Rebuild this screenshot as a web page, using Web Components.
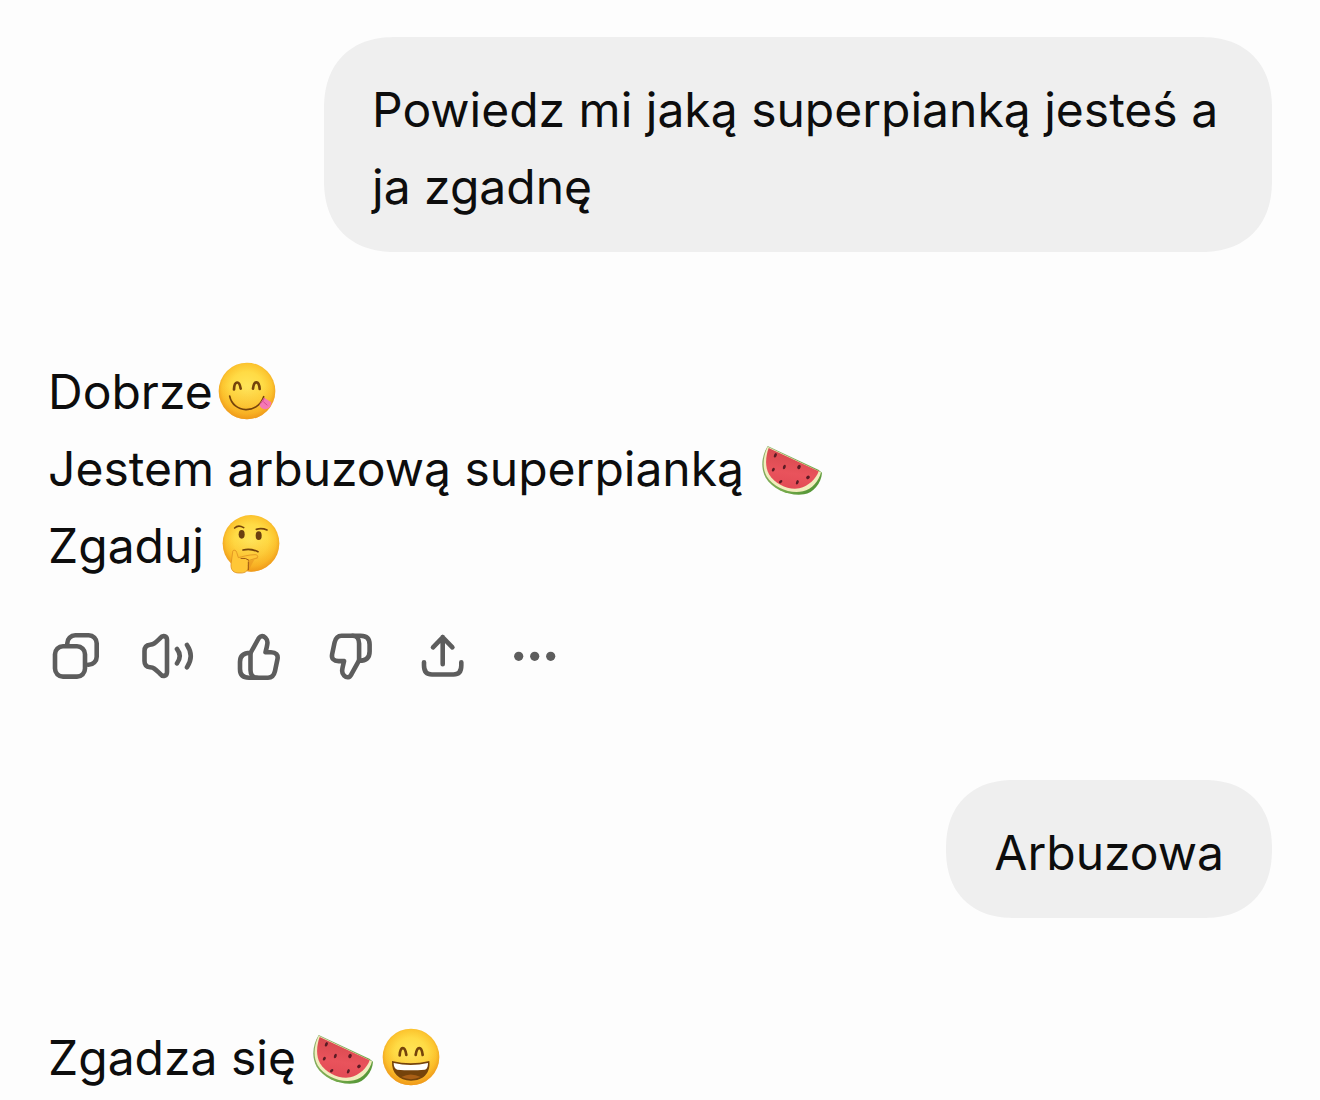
<!DOCTYPE html>
<html lang="pl">
<head>
<meta charset="utf-8">
<meta name="viewport" content="width=device-width, initial-scale=1">
<title>Superpianka</title>
<style>
  body {
    margin: 0;
    background: #fdfdfd;
    color: #0d0d0d;
    font: 48px/77px Inter, "Liberation Sans", sans-serif;
  }
  p { margin: 0; }
</style>
</head>
<body>
<chat-thread>
  <user-message>Powiedz mi jaką superpianką jesteś a ja zgadnę</user-message>
  <bot-message>
    <p>Dobrze<chat-emoji name="yum"></chat-emoji></p>
    <p>Jestem arbuzową superpianką <chat-emoji name="watermelon"></chat-emoji></p>
    <p>Zgaduj <chat-emoji name="thinking"></chat-emoji></p>
    <message-actions slot="actions"></message-actions>
  </bot-message>
  <user-message>Arbuzowa</user-message>
  <bot-message>
    <p>Zgadza się <chat-emoji name="watermelon"></chat-emoji><chat-emoji name="smile"></chat-emoji></p>
  </bot-message>
</chat-thread>

<script>
class ChatThread extends HTMLElement {
  constructor() {
    super();
    const shadow = this.attachShadow({mode: 'open'});
    shadow.innerHTML = `
      <style>
        :host { display: block; }
        main {
          display: flex;
          flex-direction: column;
          gap: 97px;
          padding: 37px 48px 0;
        }
      </style>
      <main><slot></slot></main>`;
  }
}

class UserMessage extends HTMLElement {
  constructor() {
    super();
    const shadow = this.attachShadow({mode: 'open'});
    shadow.innerHTML = `
      <style>
        :host {
          display: block;
          align-self: flex-end;
          box-sizing: border-box;
          max-width: calc(100% - 276px);
          padding: 34px 48px 27px;
          border-radius: 72px;
          corner-shape: superellipse(1.2);
          background: #efefef;
        }
      </style>
      <slot></slot>`;
  }
}

class BotMessage extends HTMLElement {
  constructor() {
    super();
    const shadow = this.attachShadow({mode: 'open'});
    shadow.innerHTML = `
      <style>
        :host { display: block; padding-top: 4px; }
        ::slotted(message-actions) { margin-top: 45px; }
      </style>
      <slot></slot>
      <slot name="actions"></slot>`;
  }
}

const thumb = `
  <path d="M18.5 24 26 10.5C28 6.3 31 6.4 33.5 8.8 36.8 12 35.3 15.5 33.5 23.3H39C44 23.3 46.3 26 45.5 30L43 42C42 46.5 40 48.7 36 48.7H17C11 48.7 8 46 8 40V33C8 27 11 23.7 18.5 23.7"/>
  <path d="M18.5 24V41C18.5 46 21 48.7 25 48.7"/>`;

const actions = [
  ['Kopiuj', `
    <rect x="7" y="17.3" width="30" height="30.3" rx="8"/>
    <path d="M19.3 15V14.3A8 8 0 0 1 27.3 6.3H40.7A8 8 0 0 1 48.7 14.3V27.7A8 8 0 0 1 40.7 35.7H40"/>`],
  ['Czytaj na głos', `
    <path d="M4.5 22C4.5 18 7 16 10 15.7 14 15.3 14.5 14.5 20 9.3 23 5.5 27 7 27 11V43C27 47 23 48.5 20 44.7 14.5 39.5 14 38.7 10 38.3 7 38 4.5 36 4.5 32Z"/>
    <path d="M37 20Q42.5 27 37 34.3M47 16Q54.5 27 47 38.3"/>`],
  ['Dobra odpowiedź', thumb],
  ['Zła odpowiedź', `<g transform="rotate(180 26.8 27.7)">${thumb}</g>`],
  ['Udostępnij', `
    <path d="M26.7 35.3V8M17 18.3 26.7 8.3 36.4 18.3"/>
    <path d="M8 33.3V36.5C8 42 10.5 45.5 16 45.5H37.5C43 45.5 45.3 42 45.3 36.5V33.3"/>`],
  ['Więcej', `
    <g fill="currentColor" stroke="none">
      <circle cx="10.7" cy="27.3" r="4.6"/>
      <circle cx="26.7" cy="27.3" r="4.6"/>
      <circle cx="42.7" cy="27.3" r="4.6"/>
    </g>`]
];

class MessageActions extends HTMLElement {
  constructor() {
    super();
    const shadow = this.attachShadow({mode: 'open'});
    shadow.innerHTML = `
      <style>
        :host {
          display: flex;
          flex-wrap: wrap;
          gap: 36px;
          color: #5d5d5d;
        }
        button {
          display: flex;
          padding: 0;
          border: 0;
          background: none;
          color: inherit;
          cursor: pointer;
        }
        svg {
          width: 56px;
          height: 54px;
          fill: none;
          stroke: currentColor;
          stroke-width: 4.6;
          stroke-linecap: round;
          stroke-linejoin: round;
        }
      </style>`;
    for (const [label, icon] of actions) {
      const button = document.createElement('button');
      button.type = 'button';
      button.setAttribute('aria-label', label);
      button.innerHTML = `<svg viewBox="0 0 56 54" aria-hidden="true">${icon}</svg>`;
      shadow.appendChild(button);
    }
  }
}

// shared yellow ball for all the faces
const face = (cx, cy) => `
  <defs>
    <radialGradient id="rim" cx=".5" cy=".46" r=".54">
      <stop offset="0" stop-color="#ffe65c"/>
      <stop offset=".55" stop-color="#ffdb45"/>
      <stop offset=".82" stop-color="#fcc52f"/>
      <stop offset="1" stop-color="#eb9a1d"/>
    </radialGradient>
    <linearGradient id="shade" x1="0" y1="0" x2="0" y2="1">
      <stop offset=".4" stop-color="#f9a51a" stop-opacity="0"/>
      <stop offset="1" stop-color="#f39a18" stop-opacity=".6"/>
    </linearGradient>
  </defs>
  <circle cx="${cx}" cy="${cy}" r="85" fill="url(#rim)"/>
  <circle cx="${cx}" cy="${cy}" r="85" fill="url(#shade)"/>`;

const emojis = {
  yum: {
    label: '😋',
    box: '39 31 180 180',
    art: `${face(129, 121)}
      <g fill="none" stroke="#75430b" stroke-linecap="round">
        <path stroke-width="8" d="M90 116C91 90 106 88 110 114M147 114C150 88 165 89 167 115"/>
        <path stroke-width="5" d="M77 136C87 188 161 192 179 138"/>
      </g>
      <path fill="#f578b4" d="M180 141 202 155C201 167 195 175 184 176 174 176 166 168 167 160Z"/>
      <path fill="none" stroke="#d74c92" stroke-width="3" d="M178 153 190 164M168 160Q177 154 181 142"/>`
  },
  smile: {
    label: '😄',
    box: '248 31 180 180',
    art: `${face(338, 121)}
      <path fill="none" stroke="#75430b" stroke-width="8" stroke-linecap="round" d="M304 116C306 88 320 87 324 115M352 115C356 87 370 88 373 115"/>
      <path fill="#75430b" d="M281 133Q337 147 393 133C397 170 374 192 338 192S279 169 281 133Z"/>
      <path fill="#fff" d="M286 139Q337 151 389 139C389 150 386 158 379 159Q338 163 297 159C289 157 286 149 286 139Z"/>
      <path fill="#a95f16" d="M309 181Q337 166 367 181 338 194 309 181Z"/>`
  },
  thinking: {
    label: '🤔',
    box: '42 30 180 180',
    art: `${face(132, 115)}
      <g fill="#6b3f10">
        <ellipse cx="104" cy="88" rx="9" ry="13"/>
        <ellipse cx="155" cy="92" rx="9" ry="13"/>
      </g>
      <g fill="none" stroke="#75430b" stroke-width="5" stroke-linecap="round">
        <path d="M83 69Q94 58 110 68M148 73Q164 68 180 75M108 135Q130 129 153 140"/>
      </g>
      <path fill="#e8941f" d="M124 168 154 160 150 149 125 196Z" opacity=".6"/>
      <path fill="#ffc737" stroke="#df9222" stroke-width="2.5" stroke-linejoin="round" d="M77 141C76 134 87 133 89 142L94 158C105 155 126 149 144 149 154 149 155 158 146 160L123 167C128 171 127 177 124 181 126 195 117 205 99 204 79 205 71 195 72 178Z"/>
      <path fill="none" stroke="#9b5712" stroke-width="3" stroke-linecap="round" d="M102 160Q117 158 125 165M124 171V194"/>`
  },
  watermelon: {
    label: '🍉',
    box: '42 24 180 180',
    art: `
      <defs>
        <linearGradient id="rind" x1="0" y1="0" x2="1" y2="1">
          <stop offset="0" stop-color="#8eae6b"/>
          <stop offset=".65" stop-color="#76aa4b"/>
          <stop offset="1" stop-color="#438c2c"/>
        </linearGradient>
        <linearGradient id="flesh" x1=".5" y1="0" x2=".3" y2="1">
          <stop offset="0" stop-color="#d4474b"/>
          <stop offset=".6" stop-color="#e9535c"/>
          <stop offset="1" stop-color="#e24a55"/>
        </linearGradient>
      </defs>
      <path fill="url(#rind)" d="M59 48C42 75 36 113 53 143 74 179 125 199 168 193 195 188 220 161 222 128L211 119Z"/>
      <path fill="#f1edbd" d="M59 50C46 78 41 112 56 139 77 174 128 193 165 184 192 178 213 153 219 127Z"/>
      <path fill="url(#flesh)" d="M62 54C52 82 51 111 63 133 82 164 122 181 154 175 182 169 205 145 212 124Z"/>
      <g fill="#5b1b24">
        <ellipse cx="82" cy="76" rx="4" ry="7" transform="rotate(25 82 76)"/>
        <ellipse cx="109" cy="111" rx="4" ry="7" transform="rotate(20 109 111)"/>
        <ellipse cx="153" cy="111" rx="5" ry="7" transform="rotate(25 153 111)"/>
        <ellipse cx="76" cy="119" rx="4" ry="6" transform="rotate(30 76 119)"/>
        <ellipse cx="180" cy="142" rx="5" ry="6" transform="rotate(45 180 142)"/>
        <ellipse cx="98" cy="155" rx="4" ry="6" transform="rotate(45 98 155)"/>
        <ellipse cx="148" cy="157" rx="4" ry="7" transform="rotate(20 148 157)"/>
      </g>`
  }
};

class ChatEmoji extends HTMLElement {
  connectedCallback() {
    const emoji = emojis[this.getAttribute('name')];
    const shadow = this.attachShadow({mode: 'open'});
    shadow.innerHTML = `
      <style>
        :host {
          display: inline-block;
          height: 60px;
          margin: 0 4px;
          vertical-align: -12px;
        }
        svg { display: block; width: 60px; height: 60px; }
      </style>
      <svg viewBox="${emoji.box}" role="img" aria-label="${emoji.label}">${emoji.art}</svg>`;
  }
}

customElements.define('chat-thread', ChatThread);
customElements.define('user-message', UserMessage);
customElements.define('bot-message', BotMessage);
customElements.define('message-actions', MessageActions);
customElements.define('chat-emoji', ChatEmoji);
</script>
</body>
</html>
